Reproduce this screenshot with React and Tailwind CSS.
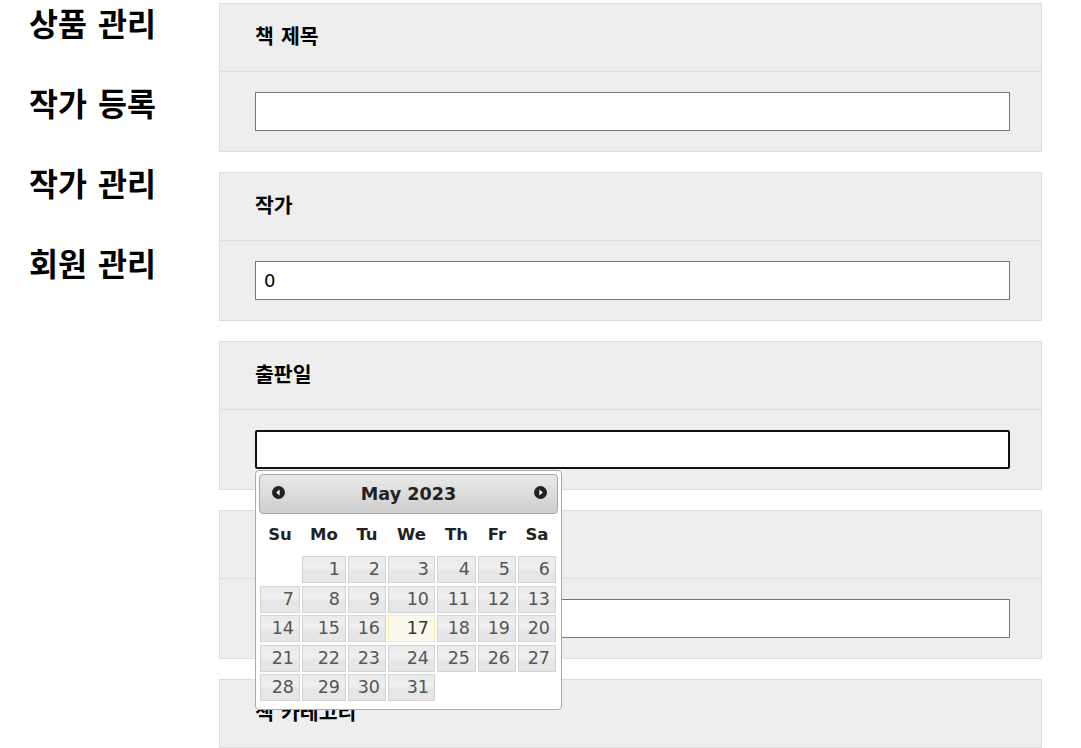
import React from "react";

const menu = ["상품 관리", "작가 등록", "작가 관리", "회원 관리"];

const weeks = [
  [null, 1, 2, 3, 4, 5, 6],
  [7, 8, 9, 10, 11, 12, 13],
  [14, 15, 16, 17, 18, 19, 20],
  [21, 22, 23, 24, 25, 26, 27],
  [28, 29, 30, 31, null, null, null],
];

const dayNames = ["Su", "Mo", "Tu", "We", "Th", "Fr", "Sa"];

const CircleArrow = ({ dir }) => (
  <svg width="13" height="13" viewBox="0 0 13 13">
    <circle cx="6.5" cy="6.5" r="6.5" fill="#222" />
    {dir === "prev" ? (
      <path d="M4.2 6.5 L7.6 3.6 L7.6 9.4 Z" fill="#fff" />
    ) : (
      <path d="M8.8 6.5 L5.4 3.6 L5.4 9.4 Z" fill="#fff" />
    )}
  </svg>
);

const DatePicker = () => (
  <div className="absolute left-0 top-full z-10 mt-px w-[307px] rounded-[4px] border border-[#aaa] bg-white px-[3px] pt-[3px] pb-[8px] font-['DejaVu_Sans',sans-serif]">
    <div className="relative flex h-[40px] items-center justify-center rounded-[4px] border border-[#aaa] bg-[linear-gradient(to_bottom,#e8e8e8_0%,#dcdcdc_50%,#cccccc_100%)]">
      <span className="absolute left-[12px] top-[11px] flex">
        <CircleArrow dir="prev" />
      </span>
      <span className="text-[17.6px] font-bold text-[#222]">May 2023</span>
      <span className="absolute right-[10px] top-[11px] flex">
        <CircleArrow dir="next" />
      </span>
    </div>
    <div className="ml-px grid grid-cols-[40px_44px_38px_47px_39px_38px_38px] gap-x-[2px]">
      {dayNames.map((d) => (
        <div key={d} className="flex h-[42px] items-center justify-center text-[16.5px] font-bold text-[#222]">
          {d}
        </div>
      ))}
    </div>
    <div className="ml-px grid grid-cols-[40px_44px_38px_47px_39px_38px_38px] gap-x-[2px] gap-y-[2.5px]">
      {weeks.flat().map((n, i) =>
        n === null ? (
          <div key={i} className="h-[27px]" />
        ) : n === 17 ? (
          <div
            key={i}
            className="flex h-[27px] items-center justify-end border border-[#fcefa1] bg-[#fbf9ee] pr-[5px] text-[17.5px] text-[#363636]"
          >
            {n}
          </div>
        ) : (
          <div
            key={i}
            className="flex h-[27px] items-center justify-end border border-[#d3d3d3] bg-[linear-gradient(to_bottom,#e9e9e9_0%,#f0f0f0_40%,#e6e6e6_60%,#e6e6e6_100%)] pr-[5px] text-[17.5px] text-[#555]"
          >
            {n}
          </div>
        )
      )}
    </div>
  </div>
);

const Panel = ({ label, value, focused, picker }) => (
  <div className="border border-[#ddd] bg-[#eee]">
    <div className="flex h-[68px] items-center border-b border-[#ddd] pl-[35px] text-[20.5px] font-bold text-black">
      {label}
    </div>
    <div className="py-[20px] pl-[35px] pr-[31px]">
      <div className="relative">
        <input
          readOnly
          defaultValue={value}
          className={
            focused
              ? "block h-[39px] w-full rounded-[2px] border-2 border-[#111] bg-white px-[7px] text-[18px] text-black outline-none"
              : "block h-[39px] w-full border border-[#767676] bg-white px-[8px] text-[18px] text-black outline-none"
          }
        />
        {picker && <DatePicker />}
      </div>
    </div>
  </div>
);

export default function App() {
  return (
    <div className="flex min-h-[748px] bg-white font-['DejaVu_Sans','Noto_Sans_CJK_KR',sans-serif]">
      <aside className="w-[219px] shrink-0 pl-[29px]">
        {menu.map((m) => (
          <div key={m} className="flex h-[80px] items-start pt-[4px] text-[31.5px] font-bold leading-[42px] text-black">
            {m}
          </div>
        ))}
      </aside>
      <main className="flex w-[823px] flex-col gap-5 pt-[3px]">
        <Panel label="책 제목" value="" />
        <Panel label="작가" value="0" />
        <Panel label="출판일" value="" focused picker />
        <Panel label="가격" value="" />
        <Panel label="책 카테고리" value="" />
      </main>
    </div>
  );
}
